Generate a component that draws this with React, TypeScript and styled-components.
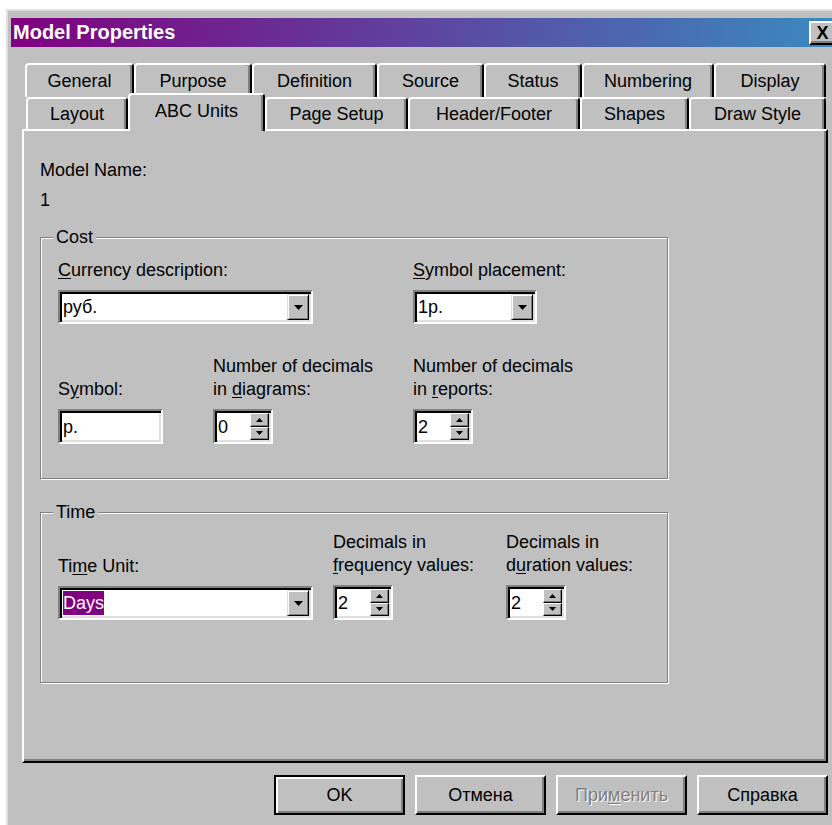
import React from "react";
import styled, { createGlobalStyle, css } from "styled-components";

const GlobalStyle = createGlobalStyle`
  body {
    margin: 0;
    background: #fff;
  }
  * {
    box-sizing: border-box;
  }
`;

const face = "#c0c0c0";

const raised = css`
  border-top: 2px solid #fff;
  border-left: 2px solid #fff;
  border-right: 2px solid #000;
  border-bottom: 2px solid #000;
  box-shadow: inset -2px -2px 0 #808080;
`;

const sunken = css`
  border-top: 2px solid #808080;
  border-left: 2px solid #808080;
  border-right: 2px solid #fff;
  border-bottom: 2px solid #fff;
  box-shadow: inset 2px 2px 0 #000, inset -2px -2px 0 #dfdfdf;
`;

const Screen = styled.div`
  width: 832px;
  height: 825px;
  overflow: hidden;
  background: #fff;
  font-family: "Liberation Sans", Arial, sans-serif;
  font-size: 18px;
  color: #000;
`;

const Window = styled.div`
  width: 838px;
  height: 820px;
  margin: 9px 0 0 6px;
  padding: 7px 3px 0 3px;
  background: ${face};
  border-top: 2px solid #dfdfdf;
  border-left: 2px solid #dfdfdf;
`;

const TitleBar = styled.div`
  height: 29px;
  display: flex;
  align-items: center;
  justify-content: space-between;
  padding-left: 2px;
  background: linear-gradient(to right, #800080, #3a8abf);
`;

const Title = styled.span`
  color: #fff;
  font-weight: bold;
  font-size: 20px;
`;

const CloseButton = styled.div`
  width: 27px;
  height: 24px;
  margin-right: 5px;
  background: ${face};
  ${raised};
  display: flex;
  align-items: center;
  justify-content: center;
  font-size: 18px;
  font-weight: bold;
  line-height: 1;
`;

const Body = styled.div`
  padding: 16px 13px 0 11px;
`;

const TabRow = styled.div<{ $h: number; $indent: number }>`
  display: flex;
  align-items: flex-start;
  height: ${(p) => p.$h}px;
  padding-left: ${(p) => p.$indent}px;
`;

const Tab = styled.div<{ $w: number; $active?: boolean }>`
  width: ${(p) => p.$w}px;
  height: 100%;
  display: flex;
  align-items: center;
  justify-content: center;
  background: ${face};
  border-top: 2px solid #fff;
  border-left: 2px solid #fff;
  border-right: 2px solid #000;
  border-radius: 4px 4px 0 0;
  box-shadow: inset -2px 0 0 #808080;
  white-space: nowrap;
  ${(p) =>
    p.$active &&
    css`
      position: relative;
      z-index: 2;
      height: 38px;
      margin-top: -4px;
      padding-bottom: 4px;
    `}
`;

const Panel = styled.div`
  width: 806px;
  height: 634px;
  border-top: 2px solid #fff;
  border-left: 2px solid #fff;
  border-right: 2px solid #000;
  border-bottom: 2px solid #000;
  box-shadow: inset -2px -2px 0 #808080;
  padding: 28px 0 0 16px;
`;

const Text = styled.div<{ $mt?: number }>`
  line-height: 22px;
  margin-top: ${(p) => p.$mt ?? 0}px;
`;

const Group = styled.div<{ $h: number; $mt: number }>`
  position: relative;
  width: 628px;
  height: ${(p) => p.$h}px;
  margin-top: ${(p) => p.$mt}px;
  border: 1px solid #808080;
  box-shadow: inset 1px 1px 0 #fff, 1px 1px 0 #fff;
`;

const Caption = styled.span`
  position: absolute;
  top: -12px;
  left: 12px;
  padding: 0 3px;
  line-height: 22px;
  background: ${face};
`;

const FieldGrid = styled.div<{ $cols: string; $top: number }>`
  display: grid;
  grid-template-columns: ${(p) => p.$cols};
  align-items: end;
  row-gap: 31px;
  padding: ${(p) => p.$top}px 0 0 17px;
`;

const Field = styled.div<{ $span?: number }>`
  display: flex;
  flex-direction: column;
  align-items: flex-start;
  gap: 8px;
  grid-column: span ${(p) => p.$span ?? 1};
`;

const Label = styled.div`
  line-height: 23px;
  white-space: nowrap;
`;

const Acc = styled.span`
  text-decoration: underline;
  text-underline-offset: 2px;
`;

const Combo = styled.div<{ $w: number }>`
  width: ${(p) => p.$w}px;
  height: 34px;
  display: flex;
  background: #fff;
  ${sunken};
  padding: 2px;
`;

const FieldText = styled.div`
  flex: 1;
  display: flex;
  align-items: center;
  padding-left: 1px;
  line-height: 24px;
`;

const Selected = styled.span`
  background: #800080;
  color: #fff;
`;

const DropButton = styled.div`
  width: 22px;
  display: flex;
  align-items: center;
  justify-content: center;
  background: ${face};
  border-top: 1px solid #dfdfdf;
  border-left: 1px solid #dfdfdf;
  border-right: 1px solid #000;
  border-bottom: 1px solid #000;
  box-shadow: inset 1px 1px 0 #fff, inset -1px -1px 0 #808080;
`;

const TextBox = styled.div<{ $w: number }>`
  width: ${(p) => p.$w}px;
  height: 35px;
  display: flex;
  background: #fff;
  ${sunken};
  padding: 2px;
`;

const SpinStack = styled.div`
  width: 19px;
  display: flex;
  flex-direction: column;
`;

const SpinHalf = styled.div`
  flex: 1;
  display: flex;
  align-items: center;
  justify-content: center;
  background: ${face};
  border-top: 1px solid #fff;
  border-left: 1px solid #fff;
  border-right: 1px solid #000;
  border-bottom: 1px solid #000;
  box-shadow: inset -1px -1px 0 #808080;
`;

const ButtonRow = styled.div`
  width: 806px;
  display: flex;
  justify-content: flex-end;
  gap: 10px;
  margin-top: 12px;
`;

const Button = styled.div<{ $default?: boolean; $disabled?: boolean }>`
  width: 131px;
  height: 40px;
  display: flex;
  align-items: center;
  justify-content: center;
  background: ${face};
  ${raised};
  ${(p) =>
    p.$default &&
    css`
      border: 2px solid #000;
      box-shadow: inset 2px 2px 0 #fff, inset -2px -2px 0 #808080;
    `}
  ${(p) =>
    p.$disabled &&
    css`
      color: #808080;
      text-shadow: 1px 1px 0 #fff;
    `}
`;

const Arrow = ({ up }: { up?: boolean }) => (
  <svg width="9" height="5" viewBox="0 0 9 5">
    <path d={up ? "M0 5 L4.5 0 L9 5 Z" : "M0 0 L9 0 L4.5 5 Z"} fill="#000" />
  </svg>
);

const SmallArrow = ({ up }: { up?: boolean }) => (
  <svg width="7" height="4" viewBox="0 0 7 4">
    <path d={up ? "M0 4 L3.5 0 L7 4 Z" : "M0 0 L7 0 L3.5 4 Z"} fill="#000" />
  </svg>
);

const ComboBox = ({ w, children }: { w: number; children: React.ReactNode }) => (
  <Combo $w={w}>
    <FieldText>{children}</FieldText>
    <DropButton>
      <Arrow />
    </DropButton>
  </Combo>
);

const Spinner = ({ value }: { value: string }) => (
  <TextBox $w={60}>
    <FieldText>{value}</FieldText>
    <SpinStack>
      <SpinHalf>
        <SmallArrow up />
      </SpinHalf>
      <SpinHalf>
        <SmallArrow />
      </SpinHalf>
    </SpinStack>
  </TextBox>
);

const backTabs = [
  { name: "General", w: 109 },
  { name: "Purpose", w: 118 },
  { name: "Definition", w: 125 },
  { name: "Source", w: 107 },
  { name: "Status", w: 98 },
  { name: "Numbering", w: 132 },
  { name: "Display", w: 112 },
];

const frontTabs = [
  { name: "Layout", w: 102 },
  { name: "ABC Units", w: 137, active: true },
  { name: "Page Setup", w: 143 },
  { name: "Header/Footer", w: 172 },
  { name: "Shapes", w: 109 },
  { name: "Draw Style", w: 137 },
];

export default function App() {
  return (
    <Screen>
      <GlobalStyle />
      <Window>
        <TitleBar>
          <Title>Model Properties</Title>
          <CloseButton>X</CloseButton>
        </TitleBar>
        <Body>
          <TabRow $h={34} $indent={3}>
            {backTabs.map((t) => (
              <Tab key={t.name} $w={t.w}>
                {t.name}
              </Tab>
            ))}
          </TabRow>
          <TabRow $h={32} $indent={4}>
            {frontTabs.map((t) => (
              <Tab key={t.name} $w={t.w} $active={t.active}>
                {t.name}
              </Tab>
            ))}
          </TabRow>
          <Panel>
            <Text>Model Name:</Text>
            <Text $mt={8}>1</Text>

            <Group $h={242} $mt={26}>
              <Caption>Cost</Caption>
              <FieldGrid $cols="155px 200px 1fr" $top={21}>
                <Field $span={2}>
                  <Label>
                    <Acc>C</Acc>urrency description:
                  </Label>
                  <ComboBox w={255}>руб.</ComboBox>
                </Field>
                <Field>
                  <Label>
                    <Acc>S</Acc>ymbol placement:
                  </Label>
                  <ComboBox w={124}>1р.</ComboBox>
                </Field>
                <Field>
                  <Label>
                    S<Acc>y</Acc>mbol:
                  </Label>
                  <TextBox $w={105}>
                    <FieldText>р.</FieldText>
                  </TextBox>
                </Field>
                <Field>
                  <Label>
                    Number of decimals
                    <br />
                    in <Acc>d</Acc>iagrams:
                  </Label>
                  <Spinner value="0" />
                </Field>
                <Field>
                  <Label>
                    Number of decimals
                    <br />
                    in <Acc>r</Acc>eports:
                  </Label>
                  <Spinner value="2" />
                </Field>
              </FieldGrid>
            </Group>

            <Group $h={171} $mt={33}>
              <Caption>Time</Caption>
              <FieldGrid $cols="275px 173px 1fr" $top={18}>
                <Field>
                  <Label>
                    Ti<Acc>m</Acc>e Unit:
                  </Label>
                  <ComboBox w={255}>
                    <Selected>Days</Selected>
                  </ComboBox>
                </Field>
                <Field>
                  <Label>
                    Decimals in
                    <br />
                    <Acc>f</Acc>requency values:
                  </Label>
                  <Spinner value="2" />
                </Field>
                <Field>
                  <Label>
                    Decimals in
                    <br />
                    d<Acc>u</Acc>ration values:
                  </Label>
                  <Spinner value="2" />
                </Field>
              </FieldGrid>
            </Group>
          </Panel>
          <ButtonRow>
            <Button $default>OK</Button>
            <Button>Отмена</Button>
            <Button $disabled>
              При<Acc>м</Acc>енить
            </Button>
            <Button>Справка</Button>
          </ButtonRow>
        </Body>
      </Window>
    </Screen>
  );
}
